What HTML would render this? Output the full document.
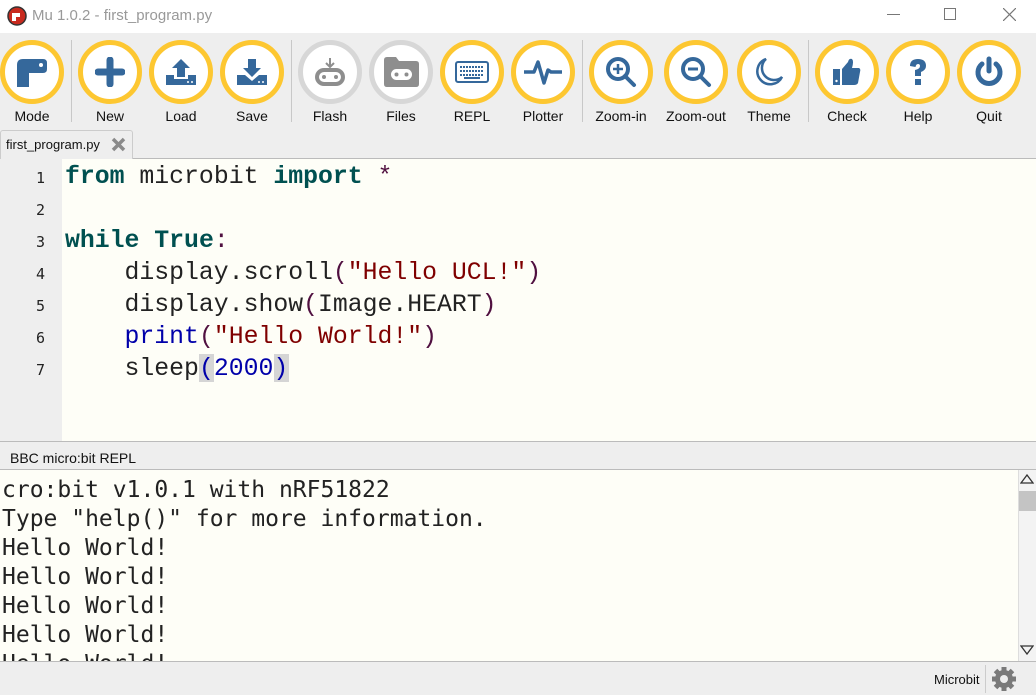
<!DOCTYPE html><html><head><style>
*{margin:0;padding:0;box-sizing:border-box}
body{width:1036px;height:695px;overflow:hidden;background:#eeeeee;font-family:"Liberation Sans",sans-serif;position:relative}
.abs{position:absolute}
.title{left:0;top:0;width:1036px;height:33px;background:#fff}
.btn{position:absolute;top:40px;width:64px;height:64px;border-radius:50%;border:5px solid #fdc731;background:#fff;display:flex;align-items:center;justify-content:center}
.btn.g{border-color:#d7d7d7}
.lbl{position:absolute;top:108px;font-size:14px;color:#111;width:90px;text-align:center}
.sep{position:absolute;top:40px;width:1px;height:82px;background:#c8c8c8}
.code{font-family:"Liberation Mono",monospace;font-size:24.8px;white-space:pre;position:absolute;left:65px;line-height:32px;top:161px;color:#222}
.kw{color:#005050;font-weight:bold}.st{color:#7f0000}.bl{color:#0000aa}.pu{color:#501040}
.ln{position:absolute;left:0;width:50px;text-align:right;font-family:"DejaVu Sans Mono",monospace;font-size:15px;color:#222}
.repl{font-family:"DejaVu Sans Mono",monospace;font-size:23px;white-space:pre;line-height:29px;position:absolute;left:2px;top:475px;color:#222}
</style></head><body>
<div class="abs title">
<svg class="abs" style="left:7px;top:6px" width="20" height="20" viewBox="0 0 20 20"><circle cx="10" cy="10" r="9" fill="#c82a1e" stroke="#333" stroke-width="1.5"/><path d="M5 15V7h8v4H9v4z" fill="#fff"/></svg>
<div class="abs" style="left:32px;top:7px;font-size:15px;color:#999">Mu 1.0.2 - first_program.py</div>
<div class="abs" style="left:887px;top:14px;width:13px;height:1px;background:#777"></div>
<div class="abs" style="left:944px;top:8px;width:12px;height:12px;border:1px solid #777"></div>
<svg class="abs" style="left:1003px;top:8px" width="13" height="13"><path d="M0 0L13 13M13 0L0 13" stroke="#777" stroke-width="1.2"/></svg>
</div>
<div class="btn" style="left:0px"><svg width="34" height="30" viewBox="0 0 34 30"><path d="M2 30V8Q2 2 8 2H28Q32 2 32 6V12Q32 16 28 16H14V30Z" fill="#35689b"/><circle cx="26" cy="8" r="2" fill="#fff"/></svg></div>
<div class="btn" style="left:78px"><svg width="30" height="30"><path d="M15 3V27M3 15H27" stroke="#35689b" stroke-width="7" stroke-linecap="round"/></svg></div>
<div class="btn" style="left:149px"><svg width="30" height="30"><path d="M15 2L6 11H11V20H19V11H24Z" fill="#35689b"/><path d="M0 18H8V22H22V18H30V28H0Z" fill="#35689b"/><circle cx="22" cy="25" r="1" fill="#fff"/><circle cx="26" cy="25" r="1" fill="#fff"/></svg></div>
<div class="btn" style="left:220px"><svg width="30" height="30"><path d="M11 2H19V11H24L15 20L6 11H11Z" fill="#35689b"/><path d="M0 18H8L15 24L22 18H30V28H0Z" fill="#35689b"/><circle cx="22" cy="25" r="1" fill="#fff"/><circle cx="26" cy="25" r="1" fill="#fff"/></svg></div>
<div class="btn g" style="left:298px"><svg width="30" height="30"><path d="M15 1V9M11 6L15 10L19 6" stroke="#8e8e8e" stroke-width="2" fill="none"/><rect x="2" y="13" width="26" height="14" rx="7" fill="none" stroke="#8e8e8e" stroke-width="4"/><circle cx="9" cy="20" r="2" fill="#8e8e8e"/><circle cx="21" cy="20" r="2" fill="#8e8e8e"/></svg></div>
<div class="btn g" style="left:369px"><svg width="38" height="32"><path d="M2 4Q2 1 5 1H14L17 5H34Q37 5 37 8V28Q37 31 34 31H5Q2 31 2 28Z" fill="#8e8e8e"/><rect x="9" y="13" width="21" height="11" rx="5.5" fill="#fff"/><circle cx="14.5" cy="18.5" r="2" fill="#8e8e8e"/><circle cx="24.5" cy="18.5" r="2" fill="#8e8e8e"/></svg></div>
<div class="btn" style="left:440px"><svg width="34" height="22"><rect x="1" y="1" width="32" height="20" rx="2" fill="none" stroke="#35689b" stroke-width="2"/><path d="M5 6H29M5 10H29M5 14H29" stroke="#35689b" stroke-width="2" stroke-dasharray="2 1"/><path d="M9 17H25" stroke="#35689b" stroke-width="2"/></svg></div>
<div class="btn" style="left:511px"><svg width="40" height="30"><path d="M1 15H11L15 5L21 26L25 13L28 15H39" stroke="#35689b" stroke-width="3.5" fill="none" stroke-linejoin="round"/></svg></div>
<div class="btn" style="left:589px"><svg width="32" height="32"><circle cx="13" cy="13" r="10" fill="none" stroke="#35689b" stroke-width="4"/><path d="M13 8V18M8 13H18" stroke="#35689b" stroke-width="2.5"/><path d="M20 20L29 29" stroke="#35689b" stroke-width="4" stroke-linecap="round"/></svg></div>
<div class="btn" style="left:664px"><svg width="32" height="32"><circle cx="13" cy="13" r="10" fill="none" stroke="#35689b" stroke-width="4"/><path d="M8 13H18" stroke="#35689b" stroke-width="3"/><path d="M20 20L29 29" stroke="#35689b" stroke-width="4" stroke-linecap="round"/></svg></div>
<div class="btn" style="left:737px"><svg width="30" height="30"><path d="M12 2A13 13 0 1 0 28 20A11 11 0 0 1 12 2Z" fill="none" stroke="#35689b" stroke-width="2.5"/></svg></div>
<div class="btn" style="left:815px"><svg width="30" height="30"><rect x="1" y="12" width="7" height="16" fill="#35689b"/><circle cx="4.5" cy="24" r="1.2" fill="#fff"/><path d="M10 12L16 5Q17 1 20 2Q22 4 20 11H27Q29 12 28 15L26 26Q25 28 22 28H10Z" fill="#35689b"/></svg></div>
<div class="btn" style="left:886px"><svg width="26" height="30"><path d="M5 9Q5 2 13 2Q21 2 21 9Q21 13 16 15V19H10V13Q15 12 15 9Q15 7 13 7Q11 7 10.5 10Z" fill="#35689b"/><rect x="10" y="22" width="6" height="6" fill="#35689b"/></svg></div>
<div class="btn" style="left:957px"><svg width="32" height="32"><path d="M9 8A11 11 0 1 0 23 8" fill="none" stroke="#35689b" stroke-width="5" stroke-linecap="round"/><path d="M16 3V15" stroke="#35689b" stroke-width="5" stroke-linecap="round"/></svg></div>
<div class="lbl" style="left:-13px">Mode</div><div class="lbl" style="left:65px">New</div><div class="lbl" style="left:136px">Load</div><div class="lbl" style="left:207px">Save</div><div class="lbl" style="left:285px">Flash</div><div class="lbl" style="left:356px">Files</div><div class="lbl" style="left:427px">REPL</div><div class="lbl" style="left:498px">Plotter</div><div class="lbl" style="left:576px">Zoom-in</div><div class="lbl" style="left:651px">Zoom-out</div><div class="lbl" style="left:724px">Theme</div><div class="lbl" style="left:802px">Check</div><div class="lbl" style="left:873px">Help</div><div class="lbl" style="left:944px">Quit</div>
<div class="sep" style="left:71px"></div><div class="sep" style="left:291px"></div><div class="sep" style="left:582px"></div><div class="sep" style="left:808px"></div>
<div class="abs" style="left:0;top:158px;width:1036px;height:1px;background:#bbb"></div>
<div class="abs" style="left:0;top:130px;width:133px;height:29px;background:#eee;border:1px solid #ccc;border-bottom:none;border-radius:3px 3px 0 0"></div>
<div class="abs" style="left:6px;top:137px;font-size:13px;color:#111">first_program.py</div>
<svg class="abs" style="left:111px;top:137px" width="15" height="15"><path d="M2 2L13 13M13 2L2 13" stroke="#8a8a8a" stroke-width="3.5"/></svg>
<div class="abs" style="left:0;top:159px;width:1036px;height:282px;background:#fefef7"></div>
<div class="abs" style="left:0;top:159px;width:62px;height:282px;background:#eeeeee"></div>
<div class="ln" style="top:169px;left:-5px">1</div><div class="ln" style="top:201px;left:-5px">2</div><div class="ln" style="top:233px;left:-5px">3</div><div class="ln" style="top:265px;left:-5px">4</div><div class="ln" style="top:297px;left:-5px">5</div><div class="ln" style="top:329px;left:-5px">6</div><div class="ln" style="top:361px;left:-5px">7</div>
<div class="abs" style="left:199px;top:354px;width:15px;height:28px;background:#d5d5d5"></div>
<div class="abs" style="left:274px;top:354px;width:15px;height:28px;background:#d5d5d5"></div>
<div class="code"><span class="kw">from</span> microbit <span class="kw">import</span> <span class="pu">*</span>

<span class="kw">while</span> <span class="kw">True</span><span class="pu">:</span>
    display.scroll<span class="pu">(</span><span class="st">"Hello UCL!"</span><span class="pu">)</span>
    display.show<span class="pu">(</span>Image.HEART<span class="pu">)</span>
    <span class="bl">print</span><span class="pu">(</span><span class="st">"Hello World!"</span><span class="pu">)</span>
    sleep<span class="bl">(2000)</span></div>
<div class="abs" style="left:0;top:441px;width:1036px;height:1px;background:#bbb"></div>
<div class="abs" style="left:10px;top:450px;font-size:14px;color:#111">BBC micro:bit REPL</div>
<div class="abs" style="left:0;top:469px;width:1036px;height:1px;background:#bbb"></div>
<div class="abs" style="left:0;top:470px;width:1018px;height:191px;background:#fefef7;overflow:hidden"><div class="repl" style="top:6px">cro:bit v1.0.1 with nRF51822
Type "help()" for more information.
Hello World!
Hello World!
Hello World!
Hello World!
Hello World!</div></div>
<div class="abs" style="left:1018px;top:470px;width:18px;height:191px;background:#f3f3f3;border-left:1px solid #ddd"></div>
<svg class="abs" style="left:1020px;top:474px" width="14" height="10"><path d="M1 9L7 1L13 9Z" fill="none" stroke="#333" stroke-width="1.3"/></svg>
<div class="abs" style="left:1019px;top:491px;width:17px;height:20px;background:#c4c4c4"></div>
<svg class="abs" style="left:1020px;top:645px" width="14" height="10"><path d="M1 1L7 9L13 1Z" fill="none" stroke="#333" stroke-width="1.3"/></svg>
<div class="abs" style="left:0;top:661px;width:1036px;height:1px;background:#bbb"></div>
<div class="abs" style="left:934px;top:672px;font-size:13px;color:#111">Microbit</div>
<div class="abs" style="left:985px;top:665px;width:1px;height:28px;background:#ccc"></div>
<svg class="abs" style="left:991px;top:666px" width="26" height="26" viewBox="0 0 26 26"><g fill="#7a7a7a"><circle cx="13" cy="13" r="9"/><g stroke="#7a7a7a" stroke-width="5"><path d="M13 1V25M1 13H25M4.5 4.5L21.5 21.5M21.5 4.5L4.5 21.5"/></g></g><circle cx="13" cy="13" r="4" fill="#eee"/></svg>
</body></html>
